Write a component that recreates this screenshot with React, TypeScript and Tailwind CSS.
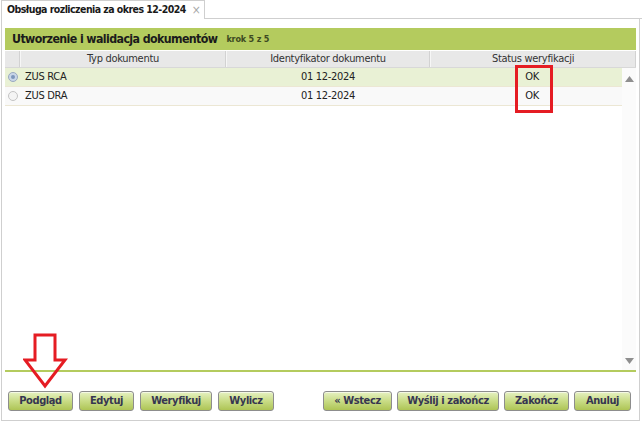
type Btn = { label: string; w: string };

const leftButtons: Btn[] = [
  { label: "Podgląd", w: "w-[65px]" },
  { label: "Edytuj", w: "w-[55px]" },
  { label: "Weryfikuj", w: "w-[72px]" },
  { label: "Wylicz", w: "w-[56px]" },
];

const rightButtons: Btn[] = [
  { label: "« Wstecz", w: "w-[69px]" },
  { label: "Wyślij i zakończ", w: "w-[102px]" },
  { label: "Zakończ", w: "w-[65px]" },
  { label: "Anuluj", w: "w-[57px]" },
];

const rows = [
  { type: "ZUS RCA", id: "01 12-2024", status: "OK", selected: true },
  { type: "ZUS DRA", id: "01 12-2024", status: "OK", selected: false },
];

function GreenButton({ label, w }: Btn) {
  return (
    <button
      className={`${w} h-[20px] rounded-[3px] border border-[#8d8d8d] bg-gradient-to-b from-[#e6f1c2] via-[#c9dc86] to-[#aec554] text-[11px] font-bold tracking-[-0.4px] text-[#363650] whitespace-nowrap shadow-[inset_0_1px_0_#f4f9e4] flex items-center justify-center`}
    >
      {label}
    </button>
  );
}

function Radio({ on }: { on: boolean }) {
  return (
    <span
      className={`w-[10px] h-[10px] rounded-full border ${
        on ? "border-[#9aaac0] bg-[#c9d6e8]" : "border-[#c4c4c4] bg-[#f4f4f4]"
      } flex items-center justify-center`}
    >
      {on && <span className="w-[4px] h-[4px] rounded-full bg-[#7d96bb]" />}
    </span>
  );
}

export default function App() {
  return (
    <div className="relative w-[642px] h-[422px] bg-white overflow-hidden font-['DejaVu_Sans_Condensed','DejaVu_Sans',sans-serif] text-[#222]">
      {/* tab strip */}
      <div className="flex h-[19px]">
        <div className="w-[204px] shrink-0 border-l border-r border-t border-[#cfcfcf] ml-[1px] flex items-center pl-[5px] bg-white whitespace-nowrap">
          <span className="text-[10.5px] font-bold tracking-[-0.55px] text-[#1a1a1a]">
            Obsługa rozliczenia za okres 12-2024
          </span>
          <span className="ml-[6px] text-[12px] text-[#a8a8a8] leading-none">×</span>
        </div>
        <div className="flex-1 border-b border-[#cfcfcf]" />
      </div>

      {/* panel body */}
      <div className="ml-[1px] mr-[2px] h-[402px] border-l border-r border-b border-[#cfcfcf] pt-[9px] px-[3px] flex flex-col">
        {/* title bar */}
        <div className="h-[22px] bg-[#b4cb5e] flex items-center pl-[7px] gap-[9px] whitespace-nowrap">
          <span className="text-[12.3px] font-bold tracking-[-0.6px] text-[#1b1b1b]">
            Utworzenie i walidacja dokumentów
          </span>
          <span className="text-[9px] font-bold tracking-[-0.2px] text-[#3d4a22] mt-[1px]">
            krok 5 z 5
          </span>
        </div>

        {/* grid */}
        <div className="flex flex-col flex-1 border-b-2 border-[#b4cb5e] mt-[1px]">
          <div className="h-[17px] flex bg-[#e8e8e8] border-b border-[#d8d8d8] text-[11px] tracking-[-0.3px] text-[#333] whitespace-nowrap">
            <div className="w-[15px] border-r border-[#d2d2d2]" />
            <div className="w-[206px] border-r border-[#d2d2d2] border-l border-l-[#f6f6f6] flex items-center justify-center">
              Typ dokumentu
            </div>
            <div className="w-[204px] border-r border-[#d2d2d2] border-l border-l-[#f6f6f6] flex items-center justify-center">
              Identyfikator dokumentu
            </div>
            <div className="flex-1 border-r border-[#d2d2d2] border-l border-l-[#f6f6f6] flex items-center justify-center">
              Status weryfikacji
            </div>
          </div>

          <div className="flex flex-1">
            <div className="flex-1 flex flex-col">
              {rows.map((r) => (
                <div
                  key={r.type}
                  className={`h-[19px] flex items-center text-[11px] tracking-[-0.3px] border-b border-[#ece7d4] ${
                    r.selected ? "bg-[#e9f1d5]" : "bg-[#f9f9f9]"
                  }`}
                >
                  <div className="w-[15px] flex justify-center">
                    <Radio on={r.selected} />
                  </div>
                  <div className="w-[206px] pl-[5px]">{r.type}</div>
                  <div className="w-[204px] flex justify-center">{r.id}</div>
                  <div className="flex-1 flex justify-center pl-[12px]">{r.status}</div>
                </div>
              ))}
            </div>
            {/* scrollbar */}
            <div className="w-[14px] bg-[#fbfbfb] flex flex-col items-center justify-between pt-[8px] pb-[6px]">
              <svg width="9" height="6" viewBox="0 0 9 6">
                <path d="M0 6 L4.5 0 L9 6 Z" fill="#8f8f8f" />
              </svg>
              <svg width="9" height="6" viewBox="0 0 9 6">
                <path d="M0 0 L4.5 6 L9 0 Z" fill="#8f8f8f" />
              </svg>
            </div>
          </div>
        </div>

        {/* buttons */}
        <div className="h-[48px] flex items-start justify-between pl-[3px] pr-[5px] pt-[19px]">
          <div className="flex gap-[6px]">
            {leftButtons.map((b) => (
              <GreenButton key={b.label} {...b} />
            ))}
          </div>
          <div className="flex gap-[5px]">
            {rightButtons.map((b) => (
              <GreenButton key={b.label} {...b} />
            ))}
          </div>
        </div>
      </div>

      {/* highlight box around the status column */}
      <div className="absolute left-[515px] top-[65px] w-[38px] h-[48px] border-[3px] border-[#e51c23]" />

      {/* pointer arrow above the preview button */}
      <svg className="absolute left-[23px] top-[333px]" width="45" height="56" viewBox="0 0 45 56">
        <path
          d="M12 2 H32 V27 H42 L22 53 L2 27 H12 Z"
          fill="none"
          stroke="#e51c23"
          strokeWidth="3"
          strokeLinejoin="miter"
        />
      </svg>
    </div>
  );
}
